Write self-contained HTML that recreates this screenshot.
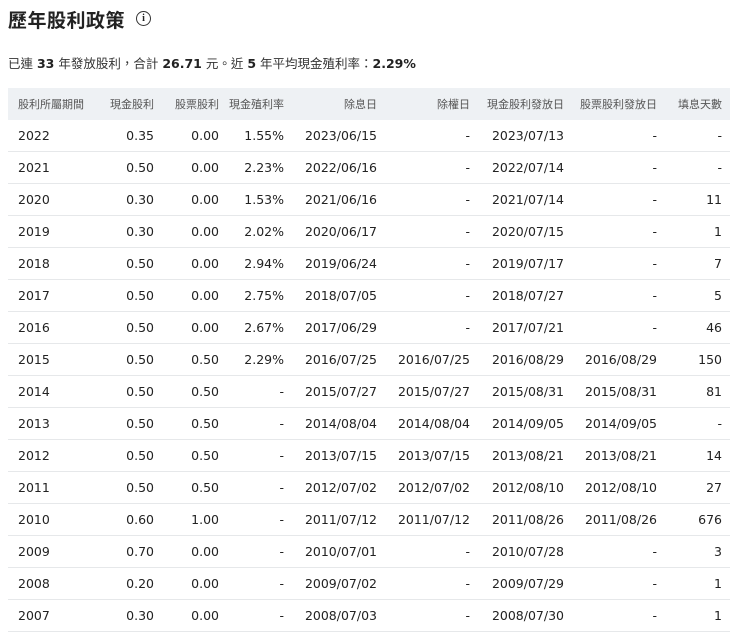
<!DOCTYPE html>
<html><head><meta charset="utf-8"><style>
body{margin:0;background:#fff;font-family:"DejaVu Sans","Liberation Sans","Noto Sans CJK TC",sans-serif;color:#222;}
h1{position:absolute;left:8px;top:6px;margin:0;font-size:19px;font-weight:bold;font-family:"Liberation Sans","Noto Sans CJK TC",sans-serif;letter-spacing:0.5px;}
.info{position:absolute;left:136px;top:11px;width:13px;height:13px;border:1.5px solid #333;border-radius:50%;font-size:10px;line-height:13px;text-align:center;font-weight:bold;font-family:"Liberation Serif",serif;}
.sum{position:absolute;left:8px;top:53px;font-size:12.5px;color:#333;}
.sum b{color:#222}
table{position:absolute;left:8px;top:88px;border-collapse:collapse;table-layout:fixed;width:722px;font-size:12.5px;}
th{background:#eef1f4;height:30px;box-sizing:content-box;font-weight:normal;font-size:11px;color:#555;text-align:right;padding:0 8px 0 0;white-space:nowrap;}
tr.h{height:30px}
td{height:31px;border-bottom:1px solid #e6e8ea;text-align:right;padding:0 8px 0 0;color:#222;}
th:first-child,td:first-child{text-align:left;padding-left:10px;}
</style></head><body>
<h1>歷年股利政策</h1><div class="info">i</div>
<div class="sum">已連 <b>33</b> 年發放股利，合計 <b>26.71</b> 元。近 <b>5</b> 年平均現金殖利率：<b>2.29%</b></div>
<table>
<colgroup><col style="width:82px"><col style="width:72px"><col style="width:65px"><col style="width:65px"><col style="width:93px"><col style="width:93px"><col style="width:94px"><col style="width:93px"><col style="width:65px"></colgroup>
<tr class="h"><th style="padding-top:1px;padding-bottom:1px">股利所屬期間</th><th>現金股利</th><th>股票股利</th><th>現金殖利率</th><th>除息日</th><th>除權日</th><th>現金股利發放日</th><th>股票股利發放日</th><th>填息天數</th></tr>
<tr><td>2022</td><td>0.35</td><td>0.00</td><td>1.55%</td><td>2023/06/15</td><td>-</td><td>2023/07/13</td><td>-</td><td>-</td></tr>
<tr><td>2021</td><td>0.50</td><td>0.00</td><td>2.23%</td><td>2022/06/16</td><td>-</td><td>2022/07/14</td><td>-</td><td>-</td></tr>
<tr><td>2020</td><td>0.30</td><td>0.00</td><td>1.53%</td><td>2021/06/16</td><td>-</td><td>2021/07/14</td><td>-</td><td>11</td></tr>
<tr><td>2019</td><td>0.30</td><td>0.00</td><td>2.02%</td><td>2020/06/17</td><td>-</td><td>2020/07/15</td><td>-</td><td>1</td></tr>
<tr><td>2018</td><td>0.50</td><td>0.00</td><td>2.94%</td><td>2019/06/24</td><td>-</td><td>2019/07/17</td><td>-</td><td>7</td></tr>
<tr><td>2017</td><td>0.50</td><td>0.00</td><td>2.75%</td><td>2018/07/05</td><td>-</td><td>2018/07/27</td><td>-</td><td>5</td></tr>
<tr><td>2016</td><td>0.50</td><td>0.00</td><td>2.67%</td><td>2017/06/29</td><td>-</td><td>2017/07/21</td><td>-</td><td>46</td></tr>
<tr><td>2015</td><td>0.50</td><td>0.50</td><td>2.29%</td><td>2016/07/25</td><td>2016/07/25</td><td>2016/08/29</td><td>2016/08/29</td><td>150</td></tr>
<tr><td>2014</td><td>0.50</td><td>0.50</td><td>-</td><td>2015/07/27</td><td>2015/07/27</td><td>2015/08/31</td><td>2015/08/31</td><td>81</td></tr>
<tr><td>2013</td><td>0.50</td><td>0.50</td><td>-</td><td>2014/08/04</td><td>2014/08/04</td><td>2014/09/05</td><td>2014/09/05</td><td>-</td></tr>
<tr><td>2012</td><td>0.50</td><td>0.50</td><td>-</td><td>2013/07/15</td><td>2013/07/15</td><td>2013/08/21</td><td>2013/08/21</td><td>14</td></tr>
<tr><td>2011</td><td>0.50</td><td>0.50</td><td>-</td><td>2012/07/02</td><td>2012/07/02</td><td>2012/08/10</td><td>2012/08/10</td><td>27</td></tr>
<tr><td>2010</td><td>0.60</td><td>1.00</td><td>-</td><td>2011/07/12</td><td>2011/07/12</td><td>2011/08/26</td><td>2011/08/26</td><td>676</td></tr>
<tr><td>2009</td><td>0.70</td><td>0.00</td><td>-</td><td>2010/07/01</td><td>-</td><td>2010/07/28</td><td>-</td><td>3</td></tr>
<tr><td>2008</td><td>0.20</td><td>0.00</td><td>-</td><td>2009/07/02</td><td>-</td><td>2009/07/29</td><td>-</td><td>1</td></tr>
<tr><td>2007</td><td>0.30</td><td>0.00</td><td>-</td><td>2008/07/03</td><td>-</td><td>2008/07/30</td><td>-</td><td>1</td></tr>
</table>
</body></html>
